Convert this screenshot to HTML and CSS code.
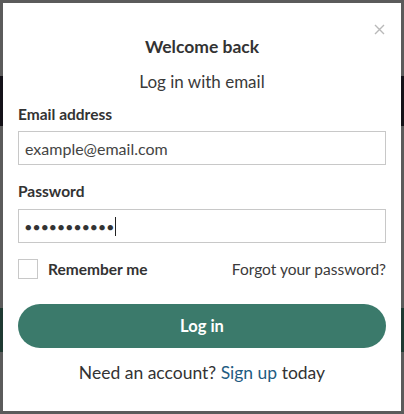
FILE: index.html
```html
<!DOCTYPE html>
<html lang="en">

<head>
    <meta charset="UTF-8">
    <meta name="viewport" content="width=device-width, initial-scale=1.0">
    <title>Log in</title>
    <link rel="stylesheet" href="styles.css">
</head>

<body>
    <div class="modal">
        <button class="close-btn" aria-label="Close">
            <svg width="11" height="11" viewBox="0 0 11 11">
                <path d="M1 1 L10 10 M10 1 L1 10" stroke="#b9b9b9" stroke-width="1.4" fill="none" />
            </svg>
        </button>

        <h2 class="modal-title">Welcome back</h2>
        <p class="modal-subtitle">Log in with email</p>

        <form class="login-form">
            <label class="field-label" for="email">Email address</label>
            <input class="field-input" id="email" type="text" value="example@email.com">

            <label class="field-label" for="password">Password</label>
            <div class="field-input password-field">
                <span class="dots">●●●●●●●●●●●</span><span class="caret"></span>
            </div>

            <div class="form-row">
                <label class="remember">
                    <span class="checkbox"></span>
                    Remember me
                </label>
                <a class="forgot" href="#">Forgot your password?</a>
            </div>

            <button type="button" class="login-btn">Log in</button>
        </form>

        <p class="signup">Need an account? <a href="#">Sign up</a> today</p>
    </div>
</body>

</html>
```

FILE: styles.css
```css
body {
    margin: 0;
    height: 414px;
    overflow: hidden;
    font-family: Lato, "Open Sans", sans-serif;
    color: #333;
    background: linear-gradient(to bottom,
        #5b5b5b 0, #5b5b5b 76px,
        #141218 76px, #141218 126px,
        #5b5b5b 126px, #5b5b5b 308px,
        #1f3a32 308px, #1f3a32 352px,
        #5b5b5b 352px);
    padding: 3px 3px 0 3px;
    box-sizing: border-box;
}

.modal {
    position: relative;
    background: #fff;
    height: 408px;
    padding: 0 15px 0 15px;
    box-sizing: border-box;
}

.close-btn {
    position: absolute;
    top: 20px;
    right: 16px;
    border: none;
    background: none;
    padding: 0;
    cursor: pointer;
}

.modal-title {
    margin: 0;
    padding-top: 33px;
    font-size: 17.5px;
    font-weight: 700;
    text-align: center;
    line-height: 22px;
    color: #333;
}

.modal-subtitle {
    margin: 13px 0 0;
    font-size: 17px;
    text-align: center;
    line-height: 22px;
    color: #3a3a3a;
}

.login-form {
    display: flex;
    flex-direction: column;
    margin-top: 11px;
}

.field-label {
    font-size: 15.5px;
    font-weight: 700;
    line-height: 20px;
    color: #333;
    margin-bottom: 7px;
}

.field-input {
    height: 34px;
    border: 1px solid #c8c8c8;
    padding: 0 6px;
    font-family: inherit;
    font-size: 16px;
    color: #444;
    box-sizing: border-box;
    outline: none;
    margin-bottom: 16px;
}

.password-field {
    display: flex;
    align-items: center;
    margin-top: 1px;
    margin-bottom: 16px;
}

.dots {
    font-size: 11px;
    letter-spacing: 1.6px;
    color: #333;
}

.caret {
    width: 1px;
    height: 19px;
    background: #222;
}

.form-row {
    display: flex;
    justify-content: space-between;
    align-items: center;
}

.remember {
    display: flex;
    align-items: center;
    gap: 10px;
    font-size: 15.5px;
    font-weight: 700;
    color: #333;
}

.checkbox {
    width: 18px;
    height: 18px;
    border: 1px solid #c8c8c8;
}

.forgot {
    font-size: 15.5px;
    color: #3a3a3a;
    text-decoration: none;
}

.login-btn {
    margin-top: 25px;
    height: 44px;
    border: none;
    border-radius: 22px;
    background-color: #3b7a6b;
    color: #fff;
    font-family: inherit;
    font-size: 16.5px;
    font-weight: 700;
    cursor: pointer;
}

.signup {
    margin: 14px 0 0;
    text-align: center;
    font-size: 17.5px;
    line-height: 22px;
    color: #333;
}

.signup a {
    color: #1f5c82;
    text-decoration: none;
}
```
